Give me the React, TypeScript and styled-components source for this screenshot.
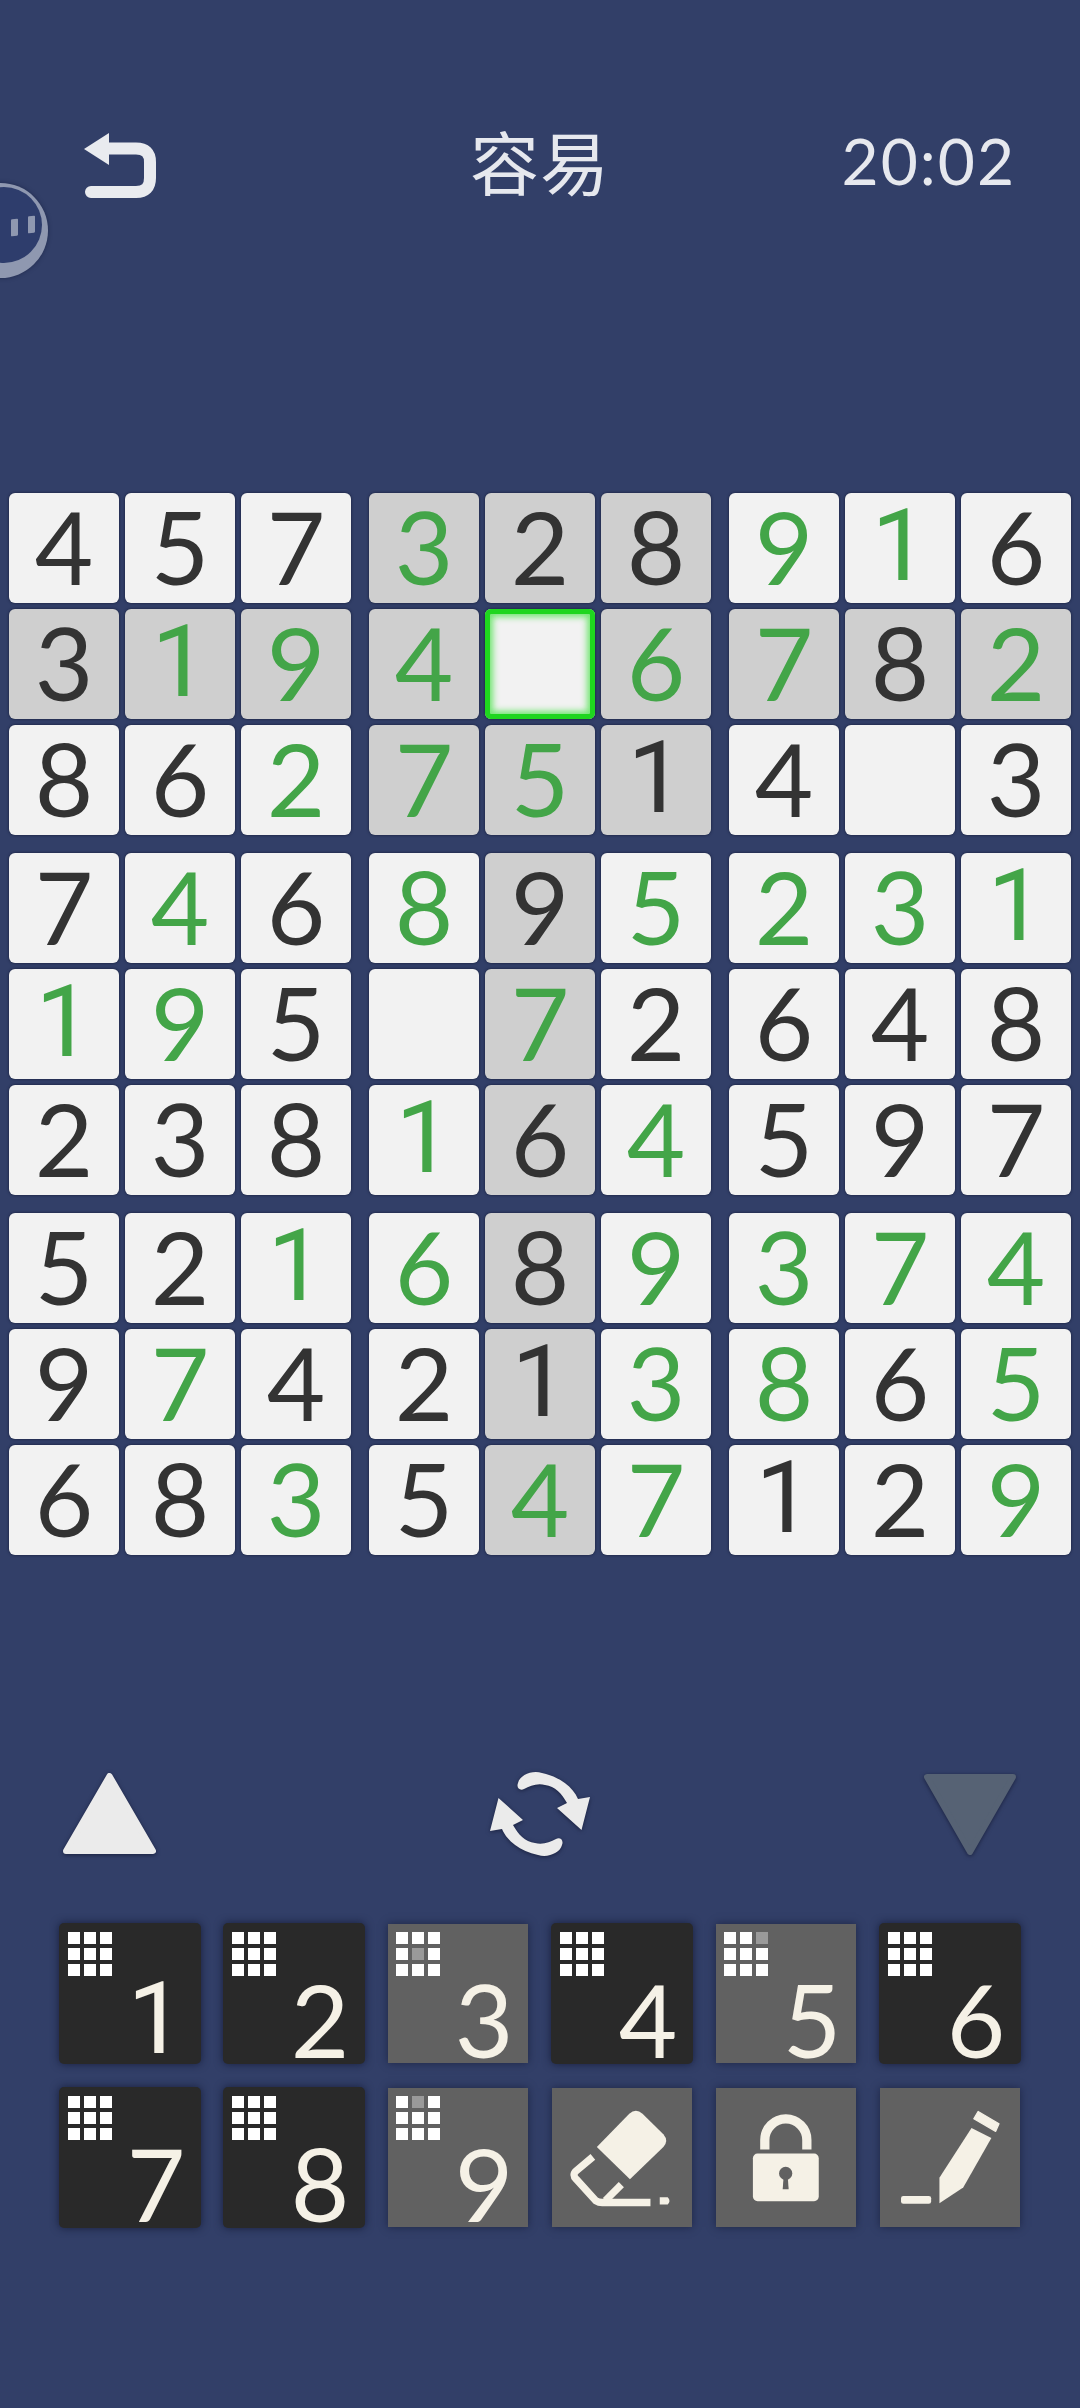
import React from 'react'
import styled, { createGlobalStyle } from 'styled-components'

const GlobalStyle = createGlobalStyle`
    html, body {
        margin: 0;
        padding: 0;
        background: #323f68;
    }
    * {
        box-sizing: border-box;
    }
`

const DIGIT_FONT = `Lato, "Liberation Sans", sans-serif`
// Lato's 1 has a foot, the game's 1 is a bare stem with a flag
const ONE_FONT = `Roboto, "Liberation Sans", sans-serif`
const INK = '#f5f1e6'

const BOARD = [
    '457328916',
    '319406782',
    '862751403',
    '746895231',
    '195072648',
    '238164597',
    '521689374',
    '974213865',
    '683547129',
]

// 1 = filled in by the player, drawn green
const FILLED = [
    '000100110',
    '011101101',
    '001110000',
    '010101111',
    '110010000',
    '000101000',
    '001101111',
    '010001101',
    '001011001',
]

const SELECTED = { row: 1, col: 4 }

const KEYS = [
    { n: 1, done: false, dim: -1 },
    { n: 2, done: false, dim: -1 },
    { n: 3, done: true, dim: 4 },
    { n: 4, done: false, dim: -1 },
    { n: 5, done: true, dim: 2 },
    { n: 6, done: false, dim: -1 },
    { n: 7, done: false, dim: -1 },
    { n: 8, done: false, dim: -1 },
    { n: 9, done: true, dim: 1 },
]

const Page = styled.div`
    position: relative;
    width: 1080px;
    height: 2408px;
    overflow: hidden;
    background: #323f68;
    padding-top: 130px;
`

const Header = styled.header`
    display: grid;
    grid-template-columns: 1fr auto 1fr;
    align-items: center;
    height: 60px;
    padding: 0 64px;
`

const BackButton = styled.div`
    align-self: start;
    margin: 3px 0 0 20px;
    width: 72px;
    height: 66px;
    color: #e9ebef;
`

const Title = styled.h1`
    margin: 0 0 14px;
    color: #e6e8ee;
    font: 400 69px "Noto Sans CJK SC", sans-serif;
    letter-spacing: 1px;
    line-height: 60px;
`

const Clock = styled.div`
    justify-self: end;
    margin-bottom: 12px;
    color: #e6e8ee;
    font: 400 64px ${DIGIT_FONT};
    letter-spacing: 2px;
    line-height: 60px;
`

const FloatBall = styled.div`
    position: absolute;
    left: -47px;
    top: 183px;
    width: 95px;
    height: 95px;
    border-radius: 50%;
    background: #8f98b0;
    box-shadow: 0 0 4px rgba(20, 28, 60, 0.6);
`

const FloatFace = styled.div`
    position: absolute;
    left: 13px;
    top: 4px;
    width: 76px;
    height: 76px;
    border-radius: 50%;
    background: #2e3d6c;
`

const FloatEye = styled.span<{ $left: number; $top: number }>`
    position: absolute;
    left: ${p => p.$left}px;
    top: ${p => p.$top}px;
    width: 7px;
    height: 17px;
    border-radius: 1px;
    background: #8f98b0;
    transform: skewY(-8deg);
`

const Board = styled.main`
    display: grid;
    grid-template-columns: repeat(3, 342px);
    grid-template-rows: repeat(3, 342px);
    gap: 18px;
    margin-top: 303px;
    padding-left: 9px;
`

const Block = styled.div`
    display: grid;
    grid-template-columns: repeat(3, 110px);
    grid-template-rows: repeat(3, 110px);
    gap: 6px;
`

const Cell = styled.div<{ $lit: boolean; $green: boolean; $selected: boolean; $one: boolean }>`
    display: flex;
    align-items: center;
    justify-content: center;
    padding-bottom: 4px;
    border-radius: 6px;
    background: ${p => (p.$lit ? '#cfcfcf' : '#f2f2f2')};
    color: ${p => (p.$green ? '#43a548' : '#333333')};
    font: 400 101px ${p => (p.$one ? ONE_FONT : DIGIT_FONT)};
    line-height: 106px;
    box-shadow: ${p => (p.$selected
        ? 'inset 0 0 0 5px #1fd61f, inset 0 0 6px 8px rgba(60, 225, 60, 0.7), 0 0 3px #141c38'
        : '0 0 3px #141c38')};
`

const ArrowRow = styled.section`
    display: flex;
    align-items: center;
    justify-content: space-between;
    height: 84px;
    margin-top: 217px;
    padding: 0 63px;
`

const ArrowIcon = styled.svg`
    display: block;
    filter: drop-shadow(0 1px 2px rgba(15, 20, 45, 0.7));
`

const Keypad = styled.section`
    display: grid;
    grid-template-columns: repeat(6, 142px);
    grid-template-rows: repeat(2, 141px);
    gap: 23px 22px;
    margin-top: 67px;
    padding-left: 59px;
`

const Key = styled.div<{ $done: boolean }>`
    display: flex;
    flex-direction: column;
    align-items: flex-start;
    padding: 9px;
    color: ${INK};
    ${p => (p.$done
        ? `background: #616161;
           margin: 1px;
           padding: 8px;
           box-shadow: 0 0 8px rgba(15, 20, 45, 0.6);`
        : `background: #292929;
           border-radius: 5px;
           box-shadow: 0 0 8px rgba(15, 20, 45, 0.75);`)}
`

const KeyIcon = styled.svg`
    display: block;
    width: 140px;
    height: 140px;
    margin: -8px;
`

const MiniGrid = styled.div`
    display: grid;
    grid-template-columns: repeat(3, 12px);
    grid-template-rows: repeat(3, 12px);
    gap: 4px;
`

const MiniDot = styled.i<{ $dim: boolean }>`
    display: block;
    background: ${p => (p.$dim ? '#9a9a9a' : '#ffffff')};
`

const KeyDigit = styled.span<{ $one: boolean }>`
    align-self: flex-end;
    width: 76px;
    margin: -4px -2px 0 0;
    text-align: center;
    font: 400 101px ${p => (p.$one ? ONE_FONT : DIGIT_FONT)};
    line-height: 94px;
`

const BackIcon = () => (
    <svg width="72" height="66" viewBox="0 0 72 66" fill="none">
        <path d="M0 16 L25 0 V32 Z" fill="currentColor" />
        <path d="M22 15.5 H52 Q66 15.5 66 29 V45 Q66 59 52 59 H7" stroke="currentColor" strokeWidth="12" strokeLinecap="round" />
    </svg>
)

const UpTriangle = () => (
    <ArrowIcon width="93" height="82" viewBox="0 0 93 82">
        <path d="M46.5 3 L90 78 H3 Z" fill="#ebebeb" stroke="#ebebeb" strokeWidth="6" strokeLinejoin="round" />
    </ArrowIcon>
)

const DownTriangle = () => (
    <ArrowIcon width="94" height="82" viewBox="0 0 94 82">
        <path d="M4 4 H90 L47 79 Z" fill="#566274" stroke="#566274" strokeWidth="6" strokeLinejoin="round" />
    </ArrowIcon>
)

const REFRESH_ARROW = 'M28 11 C30 3 42 -2 52 1 C70 5 83 15 88 27 L100 25 L91.5 58 L67 36 L77 31 C72 22 65 14 55 13 C47 11 40 14 34 17 C30 19 26 16 28 11 Z'

const RefreshIcon = () => (
    <ArrowIcon width="100" height="84" viewBox="0 0 100 84">
        <path d={REFRESH_ARROW} fill="#ebebeb" />
        <path d={REFRESH_ARROW} fill="#ebebeb" transform="rotate(180 50 42)" />
    </ArrowIcon>
)

const EraserIcon = () => (
    <KeyIcon viewBox="0 0 420 420" fill="none">
        <path d="M134 178 L232 78 Q252 60 272 78 L335 140 Q352 160 335 178 L234 276 Z" fill={INK} />
        <path d="M122 208 L72 250 Q58 262 72 276 L130 340 Q140 346 150 346 L296 346" stroke={INK} strokeWidth="22" />
        <path d="M208 292 L160 340" stroke={INK} strokeWidth="22" />
        <path d="M324 330 H348 Q359 341 348 352 H324 Z" fill={INK} />
    </KeyIcon>
)

const LockIcon = () => (
    <KeyIcon viewBox="0 0 420 420" fill="none">
        <path d="M146 186 V157 A63.5 63.5 0 0 1 273 157 V186" stroke={INK} strokeWidth="28" />
        <rect x="110" y="198" width="199" height="144" rx="14" fill={INK} />
        <circle cx="209" cy="258" r="20" fill="#616161" />
        <path d="M203 265 H215 L218 306 H200 Z" fill="#616161" />
    </KeyIcon>
)

const PencilIcon = () => (
    <KeyIcon viewBox="0 0 420 420" fill="none">
        <path d="M295 71 L358 108 L348 131 L282 93 Z" fill={INK} stroke={INK} strokeWidth="4" strokeLinejoin="round" />
        <path d="M275 121 L335 151 L250 301 L178 348 V271 Z" fill={INK} />
        <rect x="62" y="326" width="91" height="24" rx="7" fill={INK} />
    </KeyIcon>
)

const App = () => {
    const blocks = [0, 1, 2, 3, 4, 5, 6, 7, 8]
    return (
        <>
            <GlobalStyle />
            <Page>
                <Header>
                    <BackButton><BackIcon /></BackButton>
                    <Title>容易</Title>
                    <Clock>20:02</Clock>
                </Header>
                <FloatBall>
                    <FloatFace>
                        <FloatEye $left={45} $top={32} />
                        <FloatEye $left={62} $top={29} />
                    </FloatFace>
                </FloatBall>
                <Board>
                    {blocks.map(b => (
                        <Block key={b}>
                            {blocks.map(c => {
                                const row = Math.floor(b / 3) * 3 + Math.floor(c / 3)
                                const col = (b % 3) * 3 + (c % 3)
                                const value = BOARD[row][col]
                                const selected = row === SELECTED.row && col === SELECTED.col
                                const lit = row === SELECTED.row || col === SELECTED.col || b === 1
                                return (
                                    <Cell
                                        key={c}
                                        $lit={lit && !selected}
                                        $green={FILLED[row][col] === '1'}
                                        $selected={selected}
                                        $one={value === '1'}
                                    >
                                        {value === '0' ? '' : value}
                                    </Cell>
                                )
                            })}
                        </Block>
                    ))}
                </Board>
                <ArrowRow>
                    <UpTriangle />
                    <RefreshIcon />
                    <DownTriangle />
                </ArrowRow>
                <Keypad>
                    {KEYS.map(k => (
                        <Key key={k.n} $done={k.done}>
                            <MiniGrid>
                                {blocks.map(d => <MiniDot key={d} $dim={d === k.dim} />)}
                            </MiniGrid>
                            <KeyDigit $one={k.n === 1}>{k.n}</KeyDigit>
                        </Key>
                    ))}
                    <Key $done><EraserIcon /></Key>
                    <Key $done><LockIcon /></Key>
                    <Key $done><PencilIcon /></Key>
                </Keypad>
            </Page>
        </>
    )
}

export default App
